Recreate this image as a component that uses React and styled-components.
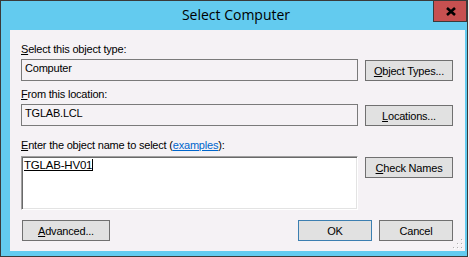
import React from 'react';
import styled, { createGlobalStyle } from 'styled-components';

const Global = createGlobalStyle`
  html, body { margin: 0; padding: 0; background: #f0f0f0; }
  body { font-family: "Liberation Sans", Arial, sans-serif; font-size: 11px; letter-spacing: -0.2px; color: #000; }
  #root { width: 469px; height: 257px; }
`;

const Window = styled.div`
  box-sizing: border-box;
  width: 468px;
  height: 257px;
  background: #63cbef;
  border: 1px solid #3a3a3a;
  display: flex;
  flex-direction: column;
`;

const TitleBar = styled.div`
  height: 29px;
  display: grid;
  grid-template-columns: 1fr auto 1fr;
  align-items: start;
`;

const Title = styled.div`
  grid-column: 2;
  padding-top: 4px;
  padding-left: 4px;
  font-family: "Open Sans", "Noto Sans", sans-serif;
  font-size: 14px;
  line-height: 19px;
  letter-spacing: 0;
  color: #000;
`;

const CloseButton = styled.div`
  grid-column: 3;
  justify-self: end;
  box-sizing: border-box;
  width: 34px;
  height: 21px;
  background: #c75050;
  border: 1px solid #3a3a3a;
  border-top: none;
  display: flex;
  align-items: center;
  justify-content: center;
  padding-left: 2px;
`;

const Panel = styled.div`
  position: relative;
  flex: 1;
  margin: 0 2px 5px 9px;
  background: #f5f2f5;
  padding: 13px 12px 0 11px;
  display: flex;
  flex-direction: column;
`;

const Label = styled.div`
  line-height: 13px;
  height: 13px;
  margin-top: ${p => p.$mt || 0}px;
  margin-bottom: ${p => p.$mb || 3}px;
  white-space: nowrap;
`;

const Link = styled.span`
  color: #0066cc;
  text-decoration: underline;
`;

const Row = styled.div`
  display: flex;
  align-items: flex-start;
  gap: 7px;
`;

const TextBox = styled.div`
  box-sizing: border-box;
  width: 337px;
  height: 22px;
  border: 1px solid #7a7a7a;
  padding: 2px 3px 0;
  line-height: 13px;
  background: #f5f2f5;
`;

const TextArea = styled.div`
  box-sizing: border-box;
  width: 337px;
  height: 54px;
  background: #fff;
  border: 1px solid;
  border-color: #a0a0a0 #ffffff #ffffff #a0a0a0;
  box-shadow: inset 1px 1px 0 #696969, inset -1px -1px 0 #e3e3e3;
  padding: 2px 3px 0 2px;
  line-height: 13px;
  font-size: 11.5px;
`;

const Resolved = styled.span`
  text-decoration: underline;
`;

const Caret = styled.span`
  display: inline-block;
  width: 0;
  height: 12px;
  border-left: 1px solid #000;
  vertical-align: -2px;
`;

const Button = styled.div`
  box-sizing: border-box;
  width: ${p => p.$w || 88}px;
  height: 21px;
  margin-top: ${p => p.$mt || 0}px;
  margin-left: ${p => p.$ml || 0}px;
  background: #e1e1e1;
  border: 1px solid ${p => (p.$default ? '#3c7fb1' : '#707070')};
  display: flex;
  align-items: center;
  justify-content: center;
  line-height: 13px;
  padding-top: 1px;
  white-space: nowrap;
`;

const Footer = styled.div`
  margin-top: 10px;
  display: flex;
  justify-content: space-between;
  align-items: flex-start;
`;

const ButtonGroup = styled.div`
  display: flex;
  gap: 7px;
`;

const Grip = styled.svg`
  position: absolute;
  right: 2px;
  bottom: 2px;
`;

export default function App() {
  return (
    <>
      <Global />
      <Window>
        <TitleBar>
          <Title>Select Computer</Title>
          <CloseButton>
            <svg width="10" height="9" viewBox="0 0 10 9">
              <path d="M1 1 L9 8 M9 1 L1 8" stroke="#000" strokeWidth="2.6" fill="none" />
            </svg>
          </CloseButton>
        </TitleBar>
        <Panel>
          <Label>
            <u>S</u>elect this object type:
          </Label>
          <Row>
            <TextBox>Computer</TextBox>
            <Button $mt={1}>
              <span><u>O</u>bject Types...</span>
            </Button>
          </Row>
          <Label $mt={7}>
            <u>F</u>rom this location:
          </Label>
          <Row>
            <TextBox>TGLAB.LCL</TextBox>
            <Button $mt={1}>
              <span><u>L</u>ocations...</span>
            </Button>
          </Row>
          <Label $mt={13} $mb={4}>
            <u>E</u>nter the object name to select (<Link>examples</Link>):
          </Label>
          <Row>
            <TextArea>
              <Resolved>TGLAB-HV01</Resolved>
              <Caret />
            </TextArea>
            <Button $mt={1}>
              <span><u>C</u>heck Names</span>
            </Button>
          </Row>
          <Footer>
            <Button $ml={1}>
              <span><u>A</u>dvanced...</span>
            </Button>
            <ButtonGroup>
              <Button $w={74} $default>OK</Button>
              <Button $w={74}>Cancel</Button>
            </ButtonGroup>
          </Footer>
          <Grip width="10" height="10" viewBox="0 0 10 10">
            <g fill="#b0b0b0">
              <rect x="8" y="0" width="1" height="1" />
              <rect x="4" y="4" width="1" height="1" />
              <rect x="8" y="4" width="1" height="1" />
              <rect x="0" y="8" width="1" height="1" />
              <rect x="4" y="8" width="1" height="1" />
              <rect x="8" y="8" width="1" height="1" />
            </g>
            <g fill="#ffffff">
              <rect x="9" y="1" width="1" height="1" />
              <rect x="5" y="5" width="1" height="1" />
              <rect x="9" y="5" width="1" height="1" />
              <rect x="1" y="9" width="1" height="1" />
              <rect x="5" y="9" width="1" height="1" />
              <rect x="9" y="9" width="1" height="1" />
            </g>
          </Grip>
        </Panel>
      </Window>
    </>
  );
}
